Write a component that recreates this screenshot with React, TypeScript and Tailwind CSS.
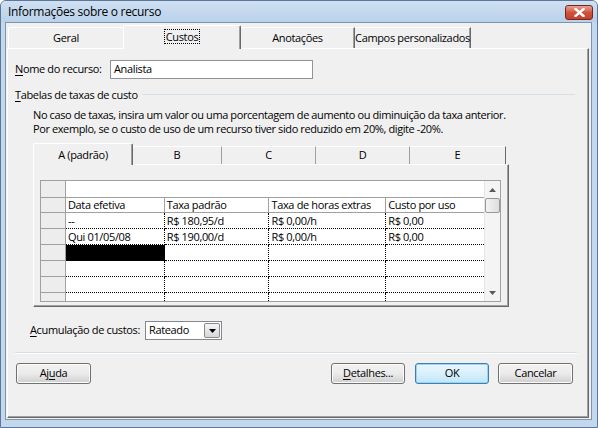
import React from "react";

const F = "font-['Open_Sans',sans-serif]";

function U({ children }: { children: React.ReactNode }) {
  return <span className="underline underline-offset-2">{children}</span>;
}

function Btn({ children, w, primary }: { children: React.ReactNode; w: string; primary?: boolean }) {
  return (
    <div
      className={
        "h-[21px] rounded-[3px] border flex items-center justify-center whitespace-nowrap " +
        w +
        " " +
        (primary
          ? "border-[#3c7fb1] bg-gradient-to-b from-[#eaf6fd] via-[#d9f0fc] to-[#bee6fd] shadow-[inset_0_0_0_1px_#9fd3f5]"
          : "border-[#707070] bg-gradient-to-b from-[#f2f2f2] via-[#ebebeb] to-[#cfcfcf] shadow-[inset_0_0_0_1px_#fcfcfc]")
      }
    >
      {children}
    </div>
  );
}

function Cell({ w, children, black, last }: { w: string; children?: React.ReactNode; black?: boolean; last?: boolean }) {
  return (
    <div
      className={
        "h-full border-b border-dotted border-black pl-[2px] leading-[15px] whitespace-nowrap overflow-hidden " +
        w +
        (last ? " " : " border-r ") +
        (black ? "bg-black" : "bg-white")
      }
    >
      {children}
    </div>
  );
}

function DataRow({ h, a, b, c, d, black }: { h: string; a?: string; b?: string; c?: string; d?: string; black?: boolean }) {
  return (
    <div className={"flex shrink-0 " + h}>
      <div className="w-[25px] h-full bg-[#ededed] border-r border-b border-[#a0a0a0]" />
      <Cell w="w-[99px]" black={black}>{a}</Cell>
      <Cell w="w-[105px]">{b}</Cell>
      <Cell w="w-[117px]">{c}</Cell>
      <Cell w="w-[98px]" last>{d}</Cell>
    </div>
  );
}

export default function App() {
  return (
    <div className={"w-[598px] h-[428px] bg-[#c3d8ed] flex flex-col text-[11px] tracking-[-0.35px] text-black overflow-hidden border border-[#5c7896] rounded-t-[6px] " + F}>
      {/* title bar */}
      <div className="h-[21px] shrink-0 flex items-center justify-between bg-gradient-to-b from-[#cfe0f2] to-[#b9d1ea]">
        <span className="pl-[7px] text-[12px] leading-[14px] mt-[1px] tracking-[-0.3px] whitespace-nowrap">Informações sobre o recurso</span>
        <div className="mr-[4px] mt-[2px] w-[28px] h-[15px] rounded-[3px] border border-[#6d2a22] bg-gradient-to-b from-[#e8a292] via-[#d0533c] to-[#c4402a] flex items-center justify-center">
          <svg width="11" height="9" viewBox="0 0 11 9">
            <path d="M1.5 1 L9.5 8 M9.5 1 L1.5 8" stroke="#fff" strokeWidth="2.4" strokeLinecap="square" />
          </svg>
        </div>
      </div>

      {/* body */}
      <div className="flex-1 ml-[4px] mr-[5px] mb-[7px] bg-[#f0f0f0] border border-[#7f94ad] flex flex-col pt-[2px] pl-[1px] pr-[2px] pb-[1px]">
        {/* outer tabs */}
        <div className="h-[23px] flex items-end pl-[1px] shrink-0 whitespace-nowrap">
          <div className="w-[115px] h-[21px] border-l border-t border-white flex items-center justify-center rounded-tl-[2px]">Geral</div>
          <div className="w-[118px] h-[24px] -mb-px z-10 bg-[#f0f0f0] border-l border-t border-white border-r border-r-[#696969] shadow-[inset_-1px_0_0_#a0a0a0] flex items-start justify-center pt-[4px] rounded-t-[2px]">
            <span className="outline outline-1 outline-dotted outline-black px-[1px] leading-[13px]">Custos</span>
          </div>
          <div className="w-[114px] h-[21px] border-t border-white border-r border-r-[#696969] shadow-[inset_-1px_0_0_#a0a0a0] flex items-center justify-center">Anotações</div>
          <div className="w-[116px] h-[21px] border-t border-white border-r border-r-[#696969] shadow-[inset_-1px_0_0_#a0a0a0] flex items-center justify-center">Campos personalizados</div>
        </div>

        {/* panel */}
        <div className="flex-1 border-l border-t border-white border-r border-b border-r-[#696969] border-b-[#696969] shadow-[inset_-1px_-1px_0_#a0a0a0] flex flex-col">
          <div className="mt-[11px] flex items-center h-[19px] shrink-0 whitespace-nowrap">
            <span className="ml-[7px] w-[95px]"><U>N</U>ome do recurso:</span>
            <div className="w-[203px] h-[19px] border border-[#8f949b] bg-white pl-[3px] flex items-center">Analista</div>
          </div>

          <div className="mt-[9px] flex items-center h-[14px] shrink-0 whitespace-nowrap">
            <span className="ml-[7px]"><U>T</U>abelas de taxas de custo</span>
            <div className="flex-1 h-[2px] border-t border-[#d5dfe5] border-b-white ml-[4px] mr-[13px]" />
          </div>

          <div className="ml-[25px] mt-[6px] leading-[14px] tracking-[-0.4px] shrink-0 whitespace-nowrap">
            <div>No caso de taxas, insira um valor ou uma porcentagem de aumento ou diminuição da taxa anterior.</div>
            <div>Por exemplo, se o custo de uso de um recurso tiver sido reduzido em 20%, digite -20%.</div>
          </div>

          {/* inner tabs */}
          <div className="ml-[25px] mt-[7px] h-[21px] flex items-end shrink-0 whitespace-nowrap">
            <div className="w-[100px] h-[22px] -mb-px z-10 bg-[#f0f0f0] border-l border-t border-white border-r border-r-[#696969] shadow-[inset_-1px_0_0_#a0a0a0] flex items-start justify-center pt-[3px] rounded-t-[2px]">A (padrão)</div>
            <div className="w-[89px] h-[18px] border-t border-white border-r border-r-[#a0a0a0] flex items-center justify-center">B</div>
            <div className="w-[94px] h-[18px] border-t border-white border-r border-r-[#a0a0a0] flex items-center justify-center">C</div>
            <div className="w-[94px] h-[18px] border-t border-white border-r border-r-[#a0a0a0] flex items-center justify-center">D</div>
            <div className="w-[96px] h-[18px] border-t border-white border-r border-r-[#696969] flex items-center justify-center">E</div>
          </div>

          {/* inner panel */}
          <div className="ml-[25px] w-[476px] h-[143px] shrink-0 border-l border-t border-white border-r border-b border-r-[#696969] border-b-[#696969] shadow-[inset_-1px_-1px_0_#a0a0a0] pl-[6px] pt-[15px]">
            <div className="w-[461px] h-[122px] border border-[#a0a0a0] flex bg-white">
              <div className="w-[444px] h-full flex flex-col overflow-hidden">
                <div className="flex h-[17px] shrink-0">
                  <div className="w-[25px] h-full bg-[#ededed] border-r border-b border-[#a0a0a0]" />
                  <div className="flex-1 h-full bg-white border-b border-[#a0a0a0]" />
                </div>
                <div className="flex h-[15px] shrink-0 whitespace-nowrap">
                  <div className="w-[25px] h-full bg-[#ededed] border-r border-b border-[#a0a0a0]" />
                  <div className="w-[99px] h-full border-r border-b border-[#a0a0a0] pl-[2px] leading-[14px]">Data efetiva</div>
                  <div className="w-[105px] h-full border-r border-b border-[#a0a0a0] pl-[2px] leading-[14px]">Taxa padrão</div>
                  <div className="w-[117px] h-full border-r border-b border-[#a0a0a0] pl-[2px] leading-[14px]">Taxa de horas extras</div>
                  <div className="w-[98px] h-full border-b border-[#a0a0a0] pl-[2px] leading-[14px]">Custo por uso</div>
                </div>
                <DataRow h="h-[16px]" a="--" b="R$ 180,95/d" c="R$ 0,00/h" d="R$ 0,00" />
                <DataRow h="h-[16px]" a="Qui 01/05/08" b="R$ 190,00/d" c="R$ 0,00/h" d="R$ 0,00" />
                <DataRow h="h-[16px]" black />
                <DataRow h="h-[16px]" />
                <DataRow h="h-[16px]" />
                <DataRow h="h-[16px]" />
              </div>
              {/* scrollbar */}
              <div className="flex-1 h-full bg-[#f4f4f4] border-l border-[#e6e6e6] flex flex-col items-center">
                <div className="h-[17px] flex items-center justify-center">
                  <svg width="7" height="4" viewBox="0 0 7 4"><path d="M0 4 L3.5 0 L7 4 Z" fill="#5a5a5a" /></svg>
                </div>
                <div className="w-[15px] h-[15px] rounded-[2px] border border-[#979797] bg-gradient-to-r from-[#f3f3f3] to-[#dedede]" />
                <div className="flex-1" />
                <div className="h-[17px] flex items-center justify-center">
                  <svg width="7" height="4" viewBox="0 0 7 4"><path d="M0 0 L3.5 4 L7 0 Z" fill="#5a5a5a" /></svg>
                </div>
              </div>
            </div>
          </div>

          {/* accumulation */}
          <div className="mt-[14px] flex items-center h-[19px] shrink-0 whitespace-nowrap">
            <span className="ml-[22px] w-[115px]"><U>A</U>cumulação de custos:</span>
            <div className="w-[77px] h-[19px] border border-[#828790] bg-white flex items-center justify-between pl-[3px] pr-[1px]">
              <span>Rateado</span>
              <div className="w-[16px] h-[15px] rounded-[2px] border border-[#8b8b8b] bg-gradient-to-b from-[#f5f5f5] to-[#d7d7d7] flex items-center justify-center">
                <svg width="7" height="4" viewBox="0 0 7 4"><path d="M0 0 L3.5 4 L7 0 Z" fill="#000" /></svg>
              </div>
            </div>
          </div>

          <div className="mt-[12px] h-[2px] border-t border-[#d5dfe5] border-b border-b-white ml-[7px] mr-[11px] shrink-0" />

          <div className="mt-[9px] flex items-center shrink-0">
            <div className="ml-[8px]">
              <Btn w="w-[75px]">Aj<U>u</U>da</Btn>
            </div>
            <div className="flex-1" />
            <Btn w="w-[74px]"><U>D</U>etalhes...</Btn>
            <div className="w-[10px]" />
            <Btn w="w-[74px]" primary>OK</Btn>
            <div className="w-[9px]" />
            <Btn w="w-[75px]">Cancelar</Btn>
            <div className="w-[15px]" />
          </div>
        </div>
      </div>
    </div>
  );
}
